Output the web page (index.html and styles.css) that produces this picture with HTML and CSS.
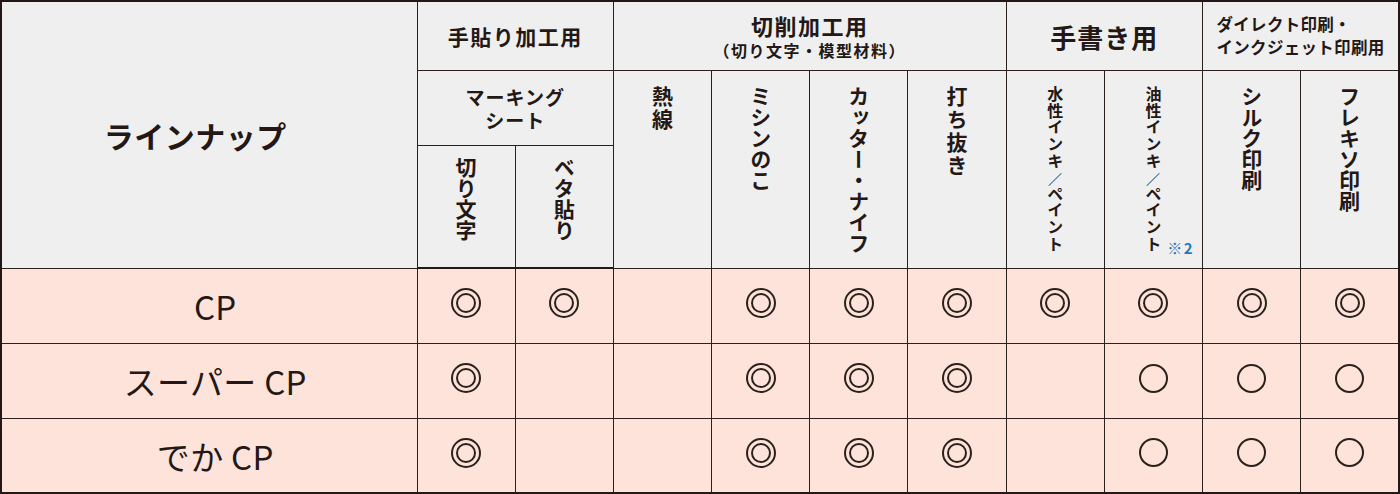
FILE: index.html
```html
<!DOCTYPE html>
<html lang="ja">
<head>
<meta charset="utf-8">
<title>ラインナップ</title>
<link rel="stylesheet" href="styles.css">
</head>
<body>
<table class="lineup-table">
  <colgroup>
    <col class="c-label">
    <col class="c-data"><col class="c-data"><col class="c-data"><col class="c-data"><col class="c-data">
    <col class="c-data"><col class="c-data"><col class="c-data"><col class="c-data"><col class="c-data">
  </colgroup>
  <thead>
    <tr class="h1">
      <th rowspan="3" class="lineup">ラインナップ</th>
      <th colspan="2" class="g1">手貼り加工用</th>
      <th colspan="4" class="g2"><div class="g2-main">切削加工用</div><div class="sub">（切り文字・模型材料）</div></th>
      <th colspan="2" class="g3">手書き用</th>
      <th colspan="2" class="g4"><div class="g4-in">ダイレクト印刷・<br>インクジェット印刷用</div></th>
    </tr>
    <tr class="h2">
      <th colspan="2" class="marking"><div class="mk-in">マーキング<br>シート</div></th>
      <th rowspan="2" class="tall"><div class="vt sp">熱線</div></th>
      <th rowspan="2" class="tall"><div class="vt">ミシンのこ</div></th>
      <th rowspan="2" class="tall"><div class="vt">カッター・ナイフ</div></th>
      <th rowspan="2" class="tall"><div class="vt sp">打ち抜き</div></th>
      <th rowspan="2" class="tall"><div class="vt small">水性インキ<span class="sl">／</span>ペイント</div></th>
      <th rowspan="2" class="tall note-cell"><div class="vt small">油性インキ<span class="sl">／</span>ペイント</div><span class="note">※2</span></th>
      <th rowspan="2" class="tall"><div class="vt">シルク印刷</div></th>
      <th rowspan="2" class="tall"><div class="vt">フレキソ印刷</div></th>
    </tr>
    <tr class="h3">
      <th class="short"><div class="vt">切り文字</div></th>
      <th class="short"><div class="vt">ベタ貼り</div></th>
    </tr>
  </thead>
  <tbody>
    <tr>
      <td class="name">CP</td>
      <td><span class="dbl"></span></td>
      <td><span class="dbl"></span></td>
      <td></td>
      <td><span class="dbl"></span></td>
      <td><span class="dbl"></span></td>
      <td><span class="dbl"></span></td>
      <td><span class="dbl"></span></td>
      <td><span class="dbl"></span></td>
      <td><span class="dbl"></span></td>
      <td><span class="dbl"></span></td>
    </tr>
    <tr>
      <td class="name">スーパー CP</td>
      <td><span class="dbl"></span></td>
      <td></td>
      <td></td>
      <td><span class="dbl"></span></td>
      <td><span class="dbl"></span></td>
      <td><span class="dbl"></span></td>
      <td></td>
      <td><span class="sgl"></span></td>
      <td><span class="sgl"></span></td>
      <td><span class="sgl"></span></td>
    </tr>
    <tr class="last">
      <td class="name">でか CP</td>
      <td><span class="dbl"></span></td>
      <td></td>
      <td></td>
      <td><span class="dbl"></span></td>
      <td><span class="dbl"></span></td>
      <td><span class="dbl"></span></td>
      <td></td>
      <td><span class="sgl"></span></td>
      <td><span class="sgl"></span></td>
      <td><span class="sgl"></span></td>
    </tr>
  </tbody>
</table>
</body>
</html>
```
FILE: styles.css
```css
html, body {
  margin: 0;
  padding: 0;
  background: #ffffff;
}

body {
  width: 1400px;
  height: 494px;
  overflow: hidden;
  font-family: "Noto Sans CJK JP", "Noto Sans", sans-serif;
  color: #231815;
}

.lineup-table {
  width: 1400px;
  table-layout: fixed;
  border-collapse: collapse;
  border: 2px solid #231815;
}

.c-label { width: 416px; }
.c-data { width: 98.2px; }

th, td {
  border: 1.5px solid #2b211c;
  padding: 0;
  text-align: center;
}

thead th {
  background: #efefef;
  font-weight: 700;
  vertical-align: middle;
}

tbody td {
  background: #fde3d9;
  vertical-align: middle;
  height: 74px;
}

thead tr.h3 th { border-bottom: 2px solid #231815; }
tr.h1 th { height: 66px; }
tr.h2 th.marking { height: 74px; }
tr.h3 th { height: 110px; }
tbody tr.last td { height: 73px; }

.lineup {
  font-size: 30px;
  padding-right: 28px;
  letter-spacing: 0.5px;
}

.g1 {
  font-size: 21px;
  letter-spacing: 1.5px;
}

.g2 {
  padding-top: 2px;
}

.g2-main {
  font-size: 22px;
  letter-spacing: 1.5px;
  line-height: 24px;
}

.g2 .sub {
  font-size: 16px;
  letter-spacing: 1.5px;
  line-height: 22px;
  margin-top: 2px;
}

.g3 {
  font-size: 26px;
  letter-spacing: 1px;
}

.g4 {
  font-size: 16.5px;
  line-height: 23px;
  letter-spacing: 0.3px;
}

.g4-in {
  display: inline-block;
  text-align: left;
}

.marking {
  font-size: 19px;
  letter-spacing: 1px;
}

.mk-in {
  line-height: 23px;
}

.tall {
  vertical-align: top;
  padding-top: 15px;
}

.short {
  vertical-align: top;
  padding-top: 11px;
}

.vt {
  display: inline-block;
  vertical-align: top;
  writing-mode: vertical-rl;
  font-size: 21px;
  line-height: 24px;
}

.vt.sp { letter-spacing: 2px; }

.vt.small {
  font-size: 16px;
  letter-spacing: 0.7px;
  line-height: 20px;
}

.sl {
  display: inline-block;
  writing-mode: horizontal-tb;
  width: 16px;
  font-size: 14px;
  font-weight: 400;
  line-height: 16px;
}

.note-cell { position: relative; }

.note {
  position: absolute;
  right: 8px;
  bottom: 12px;
  font-size: 15px;
  font-weight: 700;
  color: #2479bb;
  letter-spacing: 1.5px;
  line-height: 16px;
}

.name {
  font-size: 33px;
  font-weight: 400;
  padding-left: 12px;
  letter-spacing: 0.3px;
}

.dbl, .sgl {
  display: inline-block;
  box-sizing: border-box;
  border-radius: 50%;
  border: 2px solid #2b211c;
  vertical-align: middle;
  position: relative;
  top: -3px;
}

.dbl {
  width: 30px;
  height: 30px;
}

.dbl::after {
  content: "";
  position: absolute;
  left: 3px;
  top: 3px;
  width: 20px;
  height: 20px;
  box-sizing: border-box;
  border: 2px solid #2b211c;
  border-radius: 50%;
}

.sgl {
  width: 29px;
  height: 29px;
}
```
